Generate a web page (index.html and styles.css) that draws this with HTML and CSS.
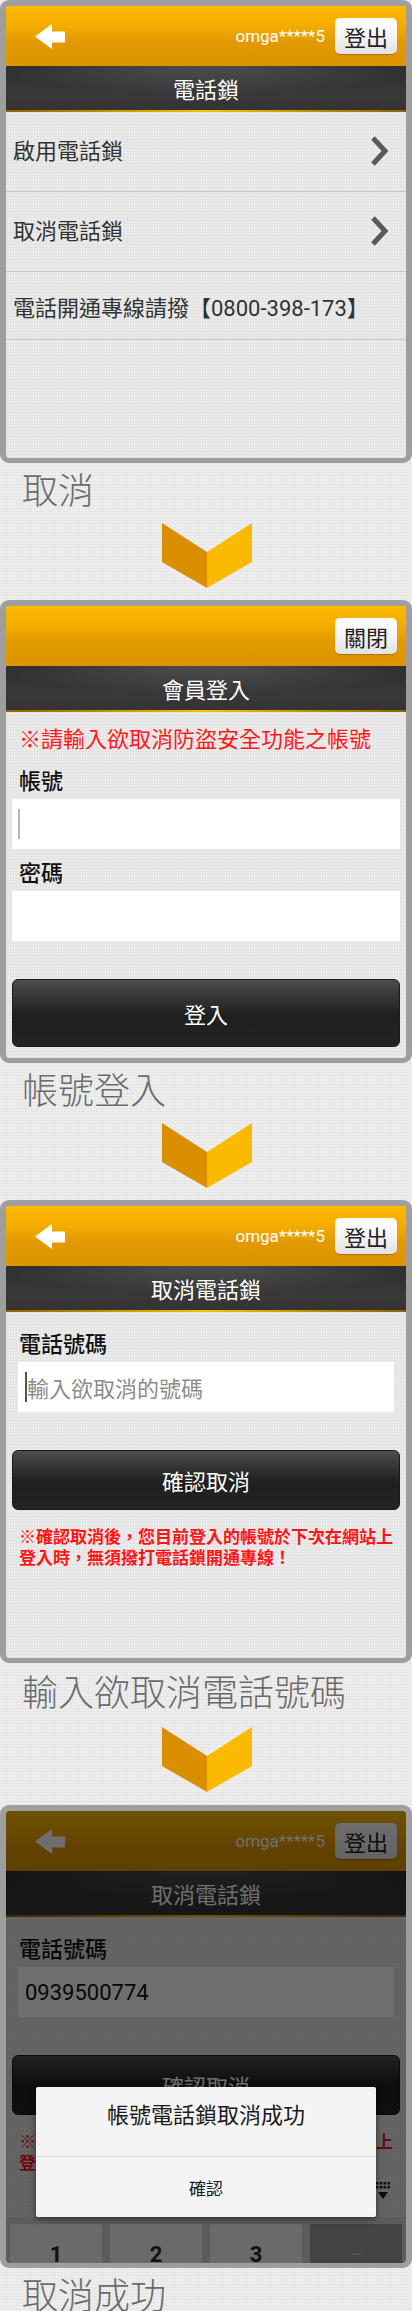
FILE: index.html
```html
<!DOCTYPE html>
<html lang="zh-Hant">
<head>
<meta charset="utf-8">
<title>取消電話鎖</title>
<link rel="stylesheet" href="styles.css">
</head>
<body>
<main class="page">

  <section class="step">
    <div class="phone">
      <header class="appbar">
        <svg class="back" width="30" height="25" viewBox="0 0 30 25"><path d="M0 12.5 L17 0 L17 7.5 L30 7.5 L30 18.5 L17 18.5 L17 25 Z" fill="#fff"/></svg>
        <span class="user">omga*****5</span>
        <span class="btn-light">登出</span>
      </header>
      <div class="titlebar">電話鎖</div>
      <div class="content">
        <div class="row row-link"><span>啟用電話鎖</span><svg class="chev" width="20" height="30" viewBox="0 0 20 30"><path d="M3 2 L15 15 L3 28" fill="none" stroke="#595959" stroke-width="5"/></svg></div>
        <div class="row row-link"><span>取消電話鎖</span><svg class="chev" width="20" height="30" viewBox="0 0 20 30"><path d="M3 2 L15 15 L3 28" fill="none" stroke="#595959" stroke-width="5"/></svg></div>
        <div class="row row-info"><span>電話開通專線請撥【0800-398-173】</span></div>
      </div>
    </div>
    <p class="caption">取消</p>
    <div class="arrow"><svg width="90" height="65" viewBox="0 0 90 65"><polygon points="0,0 45,29 45,65 0,39" fill="#d98f00"/><polygon points="45,29 90,0 90,39 45,65" fill="#fbba00"/></svg></div>
  </section>

  <section class="step">
    <div class="phone">
      <header class="appbar appbar-end">
        <span class="btn-light">關閉</span>
      </header>
      <div class="titlebar">會員登入</div>
      <div class="content form form-login">
        <p class="notice">※請輸入欲取消防盜安全功能之帳號</p>
        <p class="label label-first">帳號</p>
        <div class="field"><span class="caret caret-light"></span></div>
        <p class="label">密碼</p>
        <div class="field"></div>
        <div class="btn-dark btn-tall">登入</div>
      </div>
    </div>
    <p class="caption">帳號登入</p>
    <div class="arrow"><svg width="90" height="65" viewBox="0 0 90 65"><polygon points="0,0 45,29 45,65 0,39" fill="#d98f00"/><polygon points="45,29 90,0 90,39 45,65" fill="#fbba00"/></svg></div>
  </section>

  <section class="step step-loose">
    <div class="phone">
      <header class="appbar">
        <svg class="back" width="30" height="25" viewBox="0 0 30 25"><path d="M0 12.5 L17 0 L17 7.5 L30 7.5 L30 18.5 L17 18.5 L17 25 Z" fill="#fff"/></svg>
        <span class="user">omga*****5</span>
        <span class="btn-light">登出</span>
      </header>
      <div class="titlebar">取消電話鎖</div>
      <div class="content form form-cancel">
        <p class="label label-phone">電話號碼</p>
        <div class="field field-inset"><span class="caret"></span><span class="placeholder">輸入欲取消的號碼</span></div>
        <div class="btn-dark">確認取消</div>
        <p class="warn">※確認取消後，您目前登入的帳號於下次在網站上登入時，無須撥打電話鎖開通專線！</p>
      </div>
    </div>
    <p class="caption">輸入欲取消電話號碼</p>
    <div class="arrow"><svg width="90" height="65" viewBox="0 0 90 65"><polygon points="0,0 45,29 45,65 0,39" fill="#d98f00"/><polygon points="45,29 90,0 90,39 45,65" fill="#fbba00"/></svg></div>
  </section>

  <section class="step">
    <div class="phone">
      <header class="appbar">
        <svg class="back" width="30" height="25" viewBox="0 0 30 25"><path d="M0 12.5 L17 0 L17 7.5 L30 7.5 L30 18.5 L17 18.5 L17 25 Z" fill="#fff"/></svg>
        <span class="user">omga*****5</span>
        <span class="btn-light">登出</span>
      </header>
      <div class="titlebar">取消電話鎖</div>
      <div class="content form form-cancel">
        <p class="label label-phone">電話號碼</p>
        <div class="field field-inset"><span class="value">0939500774</span></div>
        <div class="btn-dark">確認取消</div>
        <p class="warn">※確認取消後，您目前登入的帳號於下次在網站上登入時，無須撥打電話鎖開通專線！</p>
        <div class="kbd-bar">
          <svg width="14" height="18" viewBox="0 0 14 18"><g fill="#1e1e1e"><rect x="0" y="0" width="2.5" height="2.5"/><rect x="3.8" y="0" width="2.5" height="2.5"/><rect x="7.6" y="0" width="2.5" height="2.5"/><rect x="11.4" y="0" width="2.5" height="2.5"/><rect x="0" y="4" width="2.5" height="2.5"/><rect x="3.8" y="4" width="2.5" height="2.5"/><rect x="7.6" y="4" width="2.5" height="2.5"/><rect x="11.4" y="4" width="2.5" height="2.5"/><polygon points="2,10 12,10 7,17"/></g></svg>
        </div>
        <div class="keyboard">
          <span class="key">1</span>
          <span class="key">2</span>
          <span class="key">3</span>
          <span class="key key-fn">−</span>
        </div>
      </div>
      <div class="dim"></div>
      <div class="dialog">
        <p class="dialog-title">帳號電話鎖取消成功</p>
        <p class="dialog-btn">確認</p>
      </div>
    </div>
    <p class="caption">取消成功</p>
  </section>

</main>
</body>
</html>
```
FILE: styles.css
```css
html, body {
  margin: 0;
  padding: 0;
}

body {
  width: 412px;
  font-family: Roboto, "Noto Sans CJK TC", sans-serif;
  background-color: #efefef;
  background-image: radial-gradient(circle, #e3e3e3 0.9px, transparent 1.2px);
  background-size: 3px 3px;
  color: #222;
}

p {
  margin: 0;
}

.page {
  display: flex;
  flex-direction: column;
}

.step {
  display: flex;
  flex-direction: column;
}

/* ---------- phone frame ---------- */
.phone {
  position: relative;
  height: 463px;
  box-sizing: border-box;
  border: 6px solid #9e9e9e;
  border-bottom-width: 5px;
  border-radius: 9px;
  overflow: hidden;
  display: flex;
  flex-direction: column;
  background-color: #ebebeb;
  background-image: radial-gradient(circle, #e1e1e1 0.9px, transparent 1.2px);
  background-size: 3px 3px;
}

.appbar {
  flex: none;
  height: 60px;
  display: flex;
  align-items: center;
  padding: 0 9px 0 29px;
  background: linear-gradient(#fbbb00 0%, #f3ab00 35%, #e39a00 60%, #dc9400 100%);
}

.appbar-end {
  justify-content: flex-end;
}

.back {
  display: block;
  flex: none;
}

.user {
  margin-left: auto;
  margin-right: 10px;
  color: #fff;
  font-family: Roboto, sans-serif;
  font-size: 17px;
  line-height: 20px;
}

.btn-light {
  width: 62px;
  height: 36px;
  box-sizing: border-box;
  border-radius: 5px;
  background: linear-gradient(#ffffff 0%, #f6f6f6 45%, #e2e2e2 100%);
  box-shadow: 0 1px 1px rgba(0, 0, 0, 0.25);
  color: #222;
  font-family: "Noto Sans CJK TC", sans-serif;
  font-size: 22px;
  line-height: 36px;
  text-align: center;
}

.titlebar {
  flex: none;
  height: 46px;
  box-sizing: border-box;
  padding-bottom: 2px;
  line-height: 44px;
  text-align: center;
  color: #fff;
  font-family: "Noto Sans CJK TC", sans-serif;
  font-size: 22px;
  background:
    linear-gradient(to right, #8c6400, #f7c200 50%, #8c6400) bottom / 100% 2px no-repeat,
    radial-gradient(ellipse 55% 60% at 50% 0%, rgba(255, 255, 255, 0.16), rgba(255, 255, 255, 0) 100%),
    linear-gradient(#2b2b2b, #393939 60%, #333333);
}

.content {
  flex: 1;
  display: flex;
  flex-direction: column;
  min-height: 0;
}

/* ---------- list ---------- */
.row {
  display: flex;
  align-items: center;
  padding: 0 16px 0 7px;
  border-bottom: 1px solid #c8c8c8;
  color: #333;
  font-family: "Noto Sans CJK TC", sans-serif;
  font-size: 22px;
}

.row-link {
  height: 79px;
  box-sizing: border-box;
  height: 80px;
  padding-bottom: 6px;
  justify-content: space-between;
}

.row-info {
  height: 68px;
  box-sizing: border-box;
  font-family: Roboto, "Noto Sans CJK TC", sans-serif;
}

.chev {
  display: block;
  margin-top: 5px;
}

/* ---------- forms ---------- */
.form {
  padding: 0 6px;
}

.notice {
  margin-top: 10px;
  padding-left: 7px;
  color: #ff1a1a;
  font-family: "Noto Sans CJK TC", sans-serif;
  font-size: 22px;
  line-height: 30px;
}

.label {
  margin-top: 7px;
  padding-left: 7px;
  color: #111;
  font-family: "Noto Sans CJK TC", sans-serif;
  font-size: 22px;
  font-weight: 500;
  line-height: 30px;
}

.label-first {
  margin-top: 12px;
}

.label-phone {
  margin-top: 15px;
  padding-left: 7px;
}

.field {
  margin-top: 5px;
  height: 50px;
  background: #fff;
  display: flex;
  align-items: center;
  padding-left: 6px;
}

.field-inset {
  margin-left: 6px;
  margin-right: 6px;
  padding-left: 7px;
}

.caret {
  display: block;
  width: 2px;
  height: 30px;
  background: #555;
}

.caret-light {
  background: #b5b5b5;
}

.placeholder {
  margin-left: 0;
  color: #8c8c8c;
  font-family: "Noto Sans CJK TC", sans-serif;
  font-size: 22px;
}

.value {
  color: #111;
  font-family: Roboto, sans-serif;
  font-size: 22px;
}

.btn-dark {
  margin-top: 38px;
  height: 60px;
  box-sizing: border-box;
  border-radius: 6px;
  border: 1px solid #1a1a1a;
  background: linear-gradient(#4e4e4e 0%, #3a3a3a 20%, #262626 45%, #1f1f1f 55%, #242424 100%);
  color: #fff;
  font-family: "Noto Sans CJK TC", sans-serif;
  font-size: 22px;
  line-height: 58px;
  text-align: center;
}

.btn-tall {
  height: 68px;
  line-height: 66px;
}

.warn {
  margin-top: 15px;
  padding: 0 4px 0 7px;
  color: #ff1414;
  font-family: "Noto Sans CJK TC", sans-serif;
  font-size: 17px;
  font-weight: 700;
  line-height: 21px;
}

/* ---------- keyboard ---------- */
.kbd-bar {
  margin-top: auto;
  height: 36px;
  display: flex;
  justify-content: flex-end;
  align-items: flex-start;
  padding: 1px 10px 0 0;
  box-sizing: border-box;
}

.kbd-bar svg {
  display: block;
}

.keyboard {
  flex: none;
  height: 46px;
  margin: 0 -6px;
  padding: 7px 4px 0;
  box-sizing: border-box;
  overflow: hidden;
  display: grid;
  grid-template-columns: repeat(4, 1fr);
  column-gap: 8px;
  background: #d6d6d6;
}

.key {
  height: 62px;
  background: #f6f6f6;
  color: #2a2a2a;
  font-family: Roboto, sans-serif;
  font-size: 22px;
  font-weight: 700;
  line-height: 62px;
  text-align: center;
}

.key-fn {
  background: #9c9c9c;
  color: #d0d0d0;
  font-weight: 400;
}

/* ---------- dialog ---------- */
.dim {
  position: absolute;
  inset: 0;
  background: rgba(0, 0, 0, 0.57);
}

.dialog {
  position: absolute;
  left: 30px;
  top: 276px;
  width: 340px;
  height: 130px;
  background: #f4f4f4;
  border-radius: 2px;
  box-shadow: 0 2px 6px rgba(0, 0, 0, 0.5);
  display: flex;
  flex-direction: column;
  font-family: "Noto Sans CJK TC", sans-serif;
}

.dialog-title {
  height: 70px;
  box-sizing: border-box;
  padding-bottom: 18px;
  border-bottom: 1px solid #d9d9d9;
  display: flex;
  align-items: center;
  justify-content: center;
  color: #1a1a1a;
  font-size: 22px;
}

.dialog-btn {
  flex: 1;
  display: flex;
  align-items: center;
  justify-content: center;
  color: #1a1a1a;
  font-size: 17px;
}

/* ---------- captions & arrows ---------- */
.caption {
  height: 50px;
  padding-left: 22px;
  color: #6b6b6b;
  font-family: "Noto Sans CJK TC", sans-serif;
  font-size: 36px;
  font-weight: 300;
  line-height: 50px;
}

.arrow {
  margin: 10px 0 12px;
  height: 65px;
  display: flex;
  justify-content: center;
  padding-left: 2px;
}

.arrow svg {
  display: block;
}

.step-loose .caption {
  padding-top: 2px;
}

.step-loose .arrow {
  margin: 12px 0 13px;
}
```
